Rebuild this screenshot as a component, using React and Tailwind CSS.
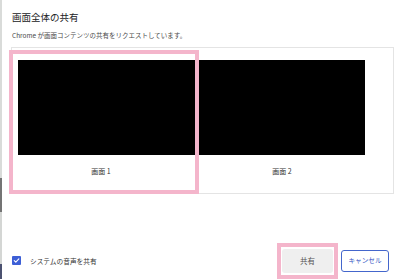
import React from "react";

const font = "font-['Noto_Sans_CJK_JP','Noto_Sans',sans-serif]";

function CheckBox() {
  return (
    <span className="flex h-[9px] w-[9px] items-center justify-center rounded-[1px] bg-[#3d5fd6]">
      <svg width="7" height="7" viewBox="0 0 10 10" fill="none">
        <path d="M1.8 5.2 L4 7.4 L8.4 2.6" stroke="#fff" strokeWidth="1.6" strokeLinecap="round" strokeLinejoin="round" />
      </svg>
    </span>
  );
}

export default function App() {
  return (
    <div className={`relative flex h-[279px] w-[400px] overflow-hidden bg-white ${font}`}>
      {/* edge of the window behind */}
      <div className="flex w-[2px] flex-col">
        <div className="h-[178px] bg-[#d9dbd9]" />
        <div className="h-[34px] bg-[#747474]" />
        <div className="h-[52px] bg-[#d4d6d4]" />
        <div className="flex-1 bg-[#4b5170]" />
      </div>

      <div className="flex flex-1 flex-col pl-[9px]">
        <div className="mt-[11px] pl-[1px] text-[9.5px] leading-[12px] text-[#202124]">画面全体の共有</div>
        <div className="mt-[7px] pl-[1px] text-[6.5px] leading-[10px] text-[#4a4a4a]">
          Chrome が画面コンテンツの共有をリクエストしています。
        </div>

        <div className="mt-[7px] flex h-[147px] w-[383px] border border-[#e4e4e4] pl-[6px] pt-[12px]">
          <div className="flex w-[177px] flex-col">
            <div className="h-[95px] w-[177px] bg-black" />
            <div className="mt-[11px] pr-[11px] text-center text-[7px] leading-[10px] text-[#333]">画面 1</div>
          </div>
          <div className="ml-[4px] flex w-[166px] flex-col">
            <div className="h-[95px] w-[166px] bg-black" />
            <div className="mt-[11px] text-center text-[7px] leading-[10px] text-[#333]">画面 2</div>
          </div>
        </div>

        <div className="mt-auto mb-[7px] flex h-[23px] items-center pr-[11px]">
          <div className="ml-[1px] flex items-center gap-[9px]">
            <CheckBox />
            <span className="text-[6.7px] leading-[10px] text-[#333]">システムの音声を共有</span>
          </div>
          <div className="ml-auto flex items-center gap-[8px]">
            <button className="flex h-[24px] w-[51px] items-center justify-center rounded-[3px] bg-[#efefef] text-[7.5px] text-[#555]">
              共有
            </button>
            <button className="flex h-[22px] w-[48px] items-center justify-center rounded-[3px] border border-[#4466cc] bg-white text-[6.6px] text-[#3556c4]">
              キャンセル
            </button>
          </div>
        </div>
      </div>

      {/* pink highlight annotations */}
      <div className="absolute left-[9px] top-[50px] h-[144px] w-[190px] border-4 border-[#f4b5cb]" />
      <div className="absolute left-[277px] top-[243px] h-[36px] w-[61px] border-4 border-[#f4b5cb]" />
    </div>
  );
}
